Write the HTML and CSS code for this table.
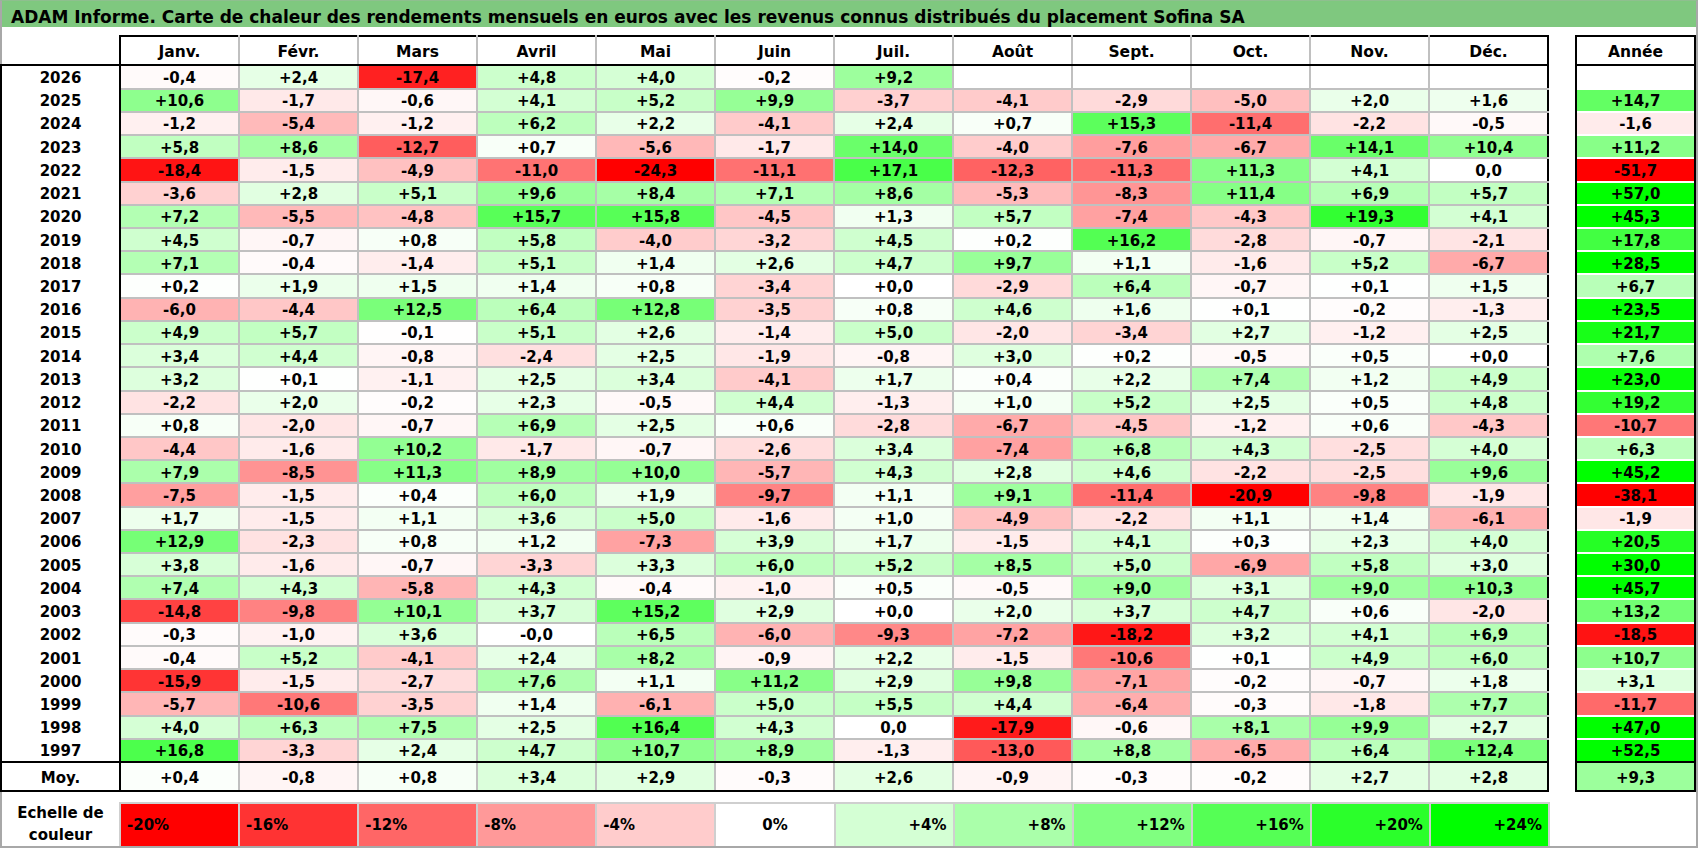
FILE: index.html
```html
<!DOCTYPE html>
<html lang="fr">
<head>
<meta charset="utf-8">
<title>ADAM Informe – Sofina SA</title>
<link rel="stylesheet" href="styles.css">
</head>
<body>
<div class="sheet">
  <div class="title">ADAM Informe. Carte de chaleur des rendements mensuels en euros avec les revenus connus distribués du placement Sofina SA</div>
  <div class="tables">
    <table class="grid main">
      <colgroup><col class="c-year"><col span="12"></colgroup>
      <thead>
        <tr class="head">
          <th class="corner"></th>
          <th>Janv.</th><th>Févr.</th><th>Mars</th><th>Avril</th><th>Mai</th><th>Juin</th>
          <th>Juil.</th><th>Août</th><th>Sept.</th><th>Oct.</th><th>Nov.</th><th>Déc.</th>
        </tr>
      </thead>
      <tbody id="main-body"></tbody>
      <tfoot><tr class="avg" id="main-avg"><th class="year">Moy.</th></tr></tfoot>
    </table>
    <table class="grid annual">
      <thead><tr class="head"><th>Année</th></tr></thead>
      <tbody id="annual-body"></tbody>
      <tfoot><tr class="avg" id="annual-avg"></tr></tfoot>
    </table>
  </div>
  <div class="scale">
    <div class="scale-label">Echelle de<br>couleur</div>
    <div class="swatches">
      <div class="sw neg s-n20">-20%</div>
      <div class="sw neg s-n16">-16%</div>
      <div class="sw neg s-n12">-12%</div>
      <div class="sw neg s-n8">-8%</div>
      <div class="sw neg s-n4">-4%</div>
      <div class="sw zero s-0">0%</div>
      <div class="sw pos s-p4">+4%</div>
      <div class="sw pos s-p8">+8%</div>
      <div class="sw pos s-p12">+12%</div>
      <div class="sw pos s-p16">+16%</div>
      <div class="sw pos s-p20">+20%</div>
      <div class="sw pos s-p24">+24%</div>
    </div>
  </div>
</div>
<script src="script.js"></script>
</body>
</html>
```

FILE: styles.css
```css
* { box-sizing: border-box; }
html, body { margin: 0; padding: 0; background: #fff; }
body {
  font-family: "DejaVu Sans", Verdana, sans-serif;
  font-weight: bold;
  font-size: 15px;
  color: #000;
}
.sheet {
  width: 1698px;
  height: 848px;
  border: 2px solid #a8a8a8;
  border-top: 1px solid #8fbf8f;
  display: flex;
  flex-direction: column;
}
.title {
  height: 27px;
  padding: 6px 0 0 9px;
  line-height: 21px;
  background: #7fc87f;
  font-size: 17px;
  white-space: nowrap;
  overflow: hidden;
}
.tables {
  display: flex;
  align-items: flex-start;
  margin: 8px 0 0 -2px;
}
.grid {
  border-collapse: collapse;
  table-layout: fixed;
  border: none;
}
.grid th, .grid td {
  padding: 2px 0 0 0;
  text-align: center;
  vertical-align: middle;
  font-weight: bold;
  white-space: nowrap;
  overflow: hidden;
}
.grid .head th { font-size: 15.5px; }

/* main table */
.main { width: 1550px; }
.main .c-year { width: 119px; }
.main .head { height: 29px; }
.main .head th {
  border: 2px solid #000;
  border-left-color: #c0c0c0;
  border-right-color: #c0c0c0;
}
.main .head th:last-child { border-right-color: #000; }
.main .head .corner {
  border-top: none;
  border-left: none;
  border-right-color: #000;
  border-bottom-color: #000;
}
.main tbody tr { height: 23.23px; }
.main tbody td { border: 2px solid #c0c0c0; }
.main tbody td:last-child { border-right-color: #000; }
.main .year {
  border: 2px solid transparent;
  border-left-color: #000;
  border-right-color: #000;
  background: #fff;
}
.main tbody tr:last-child > * { border-bottom-color: #000; }
.main .avg { height: 29px; }
.main .avg td, .main .avg th {
  border: 2px solid #000;
  border-left-color: #c0c0c0;
  border-right-color: #c0c0c0;
}
.main .avg .year { border-left-color: #000; border-right-color: #000; }
.main .avg td:last-child { border-right-color: #000; }

/* annual table */
.annual { width: 121px; margin-left: 26px; }
.annual .head { height: 29px; }
.annual .head th { border: 2px solid #000; }
.annual tbody tr { height: 23.23px; }
.annual tbody td {
  border: 2px solid transparent;
  border-left-color: #000;
  border-right-color: #000;
}
.annual tbody tr:last-child td { border-bottom-color: #000; }
.annual .avg { height: 29px; }
.annual .avg td { border: 2px solid #000; }

/* colour scale */
.scale {
  display: flex;
  margin-top: 10px;
  flex: 1;
}
.scale-label {
  width: 117px;
  display: flex;
  align-items: center;
  justify-content: center;
  text-align: center;
  line-height: 22px;
}
.swatches {
  width: 1431px;
  display: grid;
  grid-template-columns: repeat(12, 1fr);
  gap: 2px;
  padding: 2px 2px 0 2px;
  background: #cfcfcf;
}
.sw {
  display: flex;
  align-items: center;
  padding: 0 6px;
}
.sw.neg { justify-content: flex-start; }
.sw.zero { justify-content: center; }
.sw.pos { justify-content: flex-end; }
.s-n20 { background: #ff0000; }
.s-n16 { background: #ff3333; }
.s-n12 { background: #ff6666; }
.s-n8 { background: #ff9999; }
.s-n4 { background: #ffcccc; }
.s-0 { background: #ffffff; }
.s-p4 { background: #d4ffd4; }
.s-p8 { background: #aaffaa; }
.s-p12 { background: #80ff80; }
.s-p16 { background: #55ff55; }
.s-p20 { background: #2bff2b; }
.s-p24 { background: #00ff00; }
```

FILE: script.js
```js
(function () {
  var rows = [
    ["2026", "-0,4","+2,4","-17,4","+4,8","+4,0","-0,2","+9,2","","","","","",""],
    ["2025", "+10,6","-1,7","-0,6","+4,1","+5,2","+9,9","-3,7","-4,1","-2,9","-5,0","+2,0","+1,6","+14,7"],
    ["2024", "-1,2","-5,4","-1,2","+6,2","+2,2","-4,1","+2,4","+0,7","+15,3","-11,4","-2,2","-0,5","-1,6"],
    ["2023", "+5,8","+8,6","-12,7","+0,7","-5,6","-1,7","+14,0","-4,0","-7,6","-6,7","+14,1","+10,4","+11,2"],
    ["2022", "-18,4","-1,5","-4,9","-11,0","-24,3","-11,1","+17,1","-12,3","-11,3","+11,3","+4,1","0,0","-51,7"],
    ["2021", "-3,6","+2,8","+5,1","+9,6","+8,4","+7,1","+8,6","-5,3","-8,3","+11,4","+6,9","+5,7","+57,0"],
    ["2020", "+7,2","-5,5","-4,8","+15,7","+15,8","-4,5","+1,3","+5,7","-7,4","-4,3","+19,3","+4,1","+45,3"],
    ["2019", "+4,5","-0,7","+0,8","+5,8","-4,0","-3,2","+4,5","+0,2","+16,2","-2,8","-0,7","-2,1","+17,8"],
    ["2018", "+7,1","-0,4","-1,4","+5,1","+1,4","+2,6","+4,7","+9,7","+1,1","-1,6","+5,2","-6,7","+28,5"],
    ["2017", "+0,2","+1,9","+1,5","+1,4","+0,8","-3,4","+0,0","-2,9","+6,4","-0,7","+0,1","+1,5","+6,7"],
    ["2016", "-6,0","-4,4","+12,5","+6,4","+12,8","-3,5","+0,8","+4,6","+1,6","+0,1","-0,2","-1,3","+23,5"],
    ["2015", "+4,9","+5,7","-0,1","+5,1","+2,6","-1,4","+5,0","-2,0","-3,4","+2,7","-1,2","+2,5","+21,7"],
    ["2014", "+3,4","+4,4","-0,8","-2,4","+2,5","-1,9","-0,8","+3,0","+0,2","-0,5","+0,5","+0,0","+7,6"],
    ["2013", "+3,2","+0,1","-1,1","+2,5","+3,4","-4,1","+1,7","+0,4","+2,2","+7,4","+1,2","+4,9","+23,0"],
    ["2012", "-2,2","+2,0","-0,2","+2,3","-0,5","+4,4","-1,3","+1,0","+5,2","+2,5","+0,5","+4,8","+19,2"],
    ["2011", "+0,8","-2,0","-0,7","+6,9","+2,5","+0,6","-2,8","-6,7","-4,5","-1,2","+0,6","-4,3","-10,7"],
    ["2010", "-4,4","-1,6","+10,2","-1,7","-0,7","-2,6","+3,4","-7,4","+6,8","+4,3","-2,5","+4,0","+6,3"],
    ["2009", "+7,9","-8,5","+11,3","+8,9","+10,0","-5,7","+4,3","+2,8","+4,6","-2,2","-2,5","+9,6","+45,2"],
    ["2008", "-7,5","-1,5","+0,4","+6,0","+1,9","-9,7","+1,1","+9,1","-11,4","-20,9","-9,8","-1,9","-38,1"],
    ["2007", "+1,7","-1,5","+1,1","+3,6","+5,0","-1,6","+1,0","-4,9","-2,2","+1,1","+1,4","-6,1","-1,9"],
    ["2006", "+12,9","-2,3","+0,8","+1,2","-7,3","+3,9","+1,7","-1,5","+4,1","+0,3","+2,3","+4,0","+20,5"],
    ["2005", "+3,8","-1,6","-0,7","-3,3","+3,3","+6,0","+5,2","+8,5","+5,0","-6,9","+5,8","+3,0","+30,0"],
    ["2004", "+7,4","+4,3","-5,8","+4,3","-0,4","-1,0","+0,5","-0,5","+9,0","+3,1","+9,0","+10,3","+45,7"],
    ["2003", "-14,8","-9,8","+10,1","+3,7","+15,2","+2,9","+0,0","+2,0","+3,7","+4,7","+0,6","-2,0","+13,2"],
    ["2002", "-0,3","-1,0","+3,6","-0,0","+6,5","-6,0","-9,3","-7,2","-18,2","+3,2","+4,1","+6,9","-18,5"],
    ["2001", "-0,4","+5,2","-4,1","+2,4","+8,2","-0,9","+2,2","-1,5","-10,6","+0,1","+4,9","+6,0","+10,7"],
    ["2000", "-15,9","-1,5","-2,7","+7,6","+1,1","+11,2","+2,9","+9,8","-7,1","-0,2","-0,7","+1,8","+3,1"],
    ["1999", "-5,7","-10,6","-3,5","+1,4","-6,1","+5,0","+5,5","+4,4","-6,4","-0,3","-1,8","+7,7","-11,7"],
    ["1998", "+4,0","+6,3","+7,5","+2,5","+16,4","+4,3","0,0","-17,9","-0,6","+8,1","+9,9","+2,7","+47,0"],
    ["1997", "+16,8","-3,3","+2,4","+4,7","+10,7","+8,9","-1,3","-13,0","+8,8","-6,5","+6,4","+12,4","+52,5"]
  ];
  var avg = ["+0,4","-0,8","+0,8","+3,4","+2,9","-0,3","+2,6","-0,9","-0,3","-0,2","+2,7","+2,8","+9,3"];

  function colour(text) {
    if (text === "") return "#ffffff";
    var v = parseFloat(text.replace(",", "."));
    var t, c;
    if (v < 0) {
      t = Math.min(-v / 20, 1);
      c = Math.round(255 * (1 - t));
      return "rgb(255," + c + "," + c + ")";
    }
    t = Math.min(v / 24, 1);
    c = Math.round(255 * (1 - t));
    return "rgb(" + c + ",255," + c + ")";
  }

  function cell(text) {
    var td = document.createElement("td");
    td.textContent = text;
    td.style.background = colour(text);
    return td;
  }

  var mainBody = document.getElementById("main-body");
  var annualBody = document.getElementById("annual-body");
  rows.forEach(function (r) {
    var tr = document.createElement("tr");
    var th = document.createElement("th");
    th.className = "year";
    th.textContent = r[0];
    tr.appendChild(th);
    for (var i = 1; i <= 12; i++) tr.appendChild(cell(r[i]));
    mainBody.appendChild(tr);

    var tr2 = document.createElement("tr");
    tr2.appendChild(cell(r[13]));
    annualBody.appendChild(tr2);
  });

  var avgRow = document.getElementById("main-avg");
  for (var i = 0; i < 12; i++) avgRow.appendChild(cell(avg[i]));
  document.getElementById("annual-avg").appendChild(cell(avg[12]));
})();
```
